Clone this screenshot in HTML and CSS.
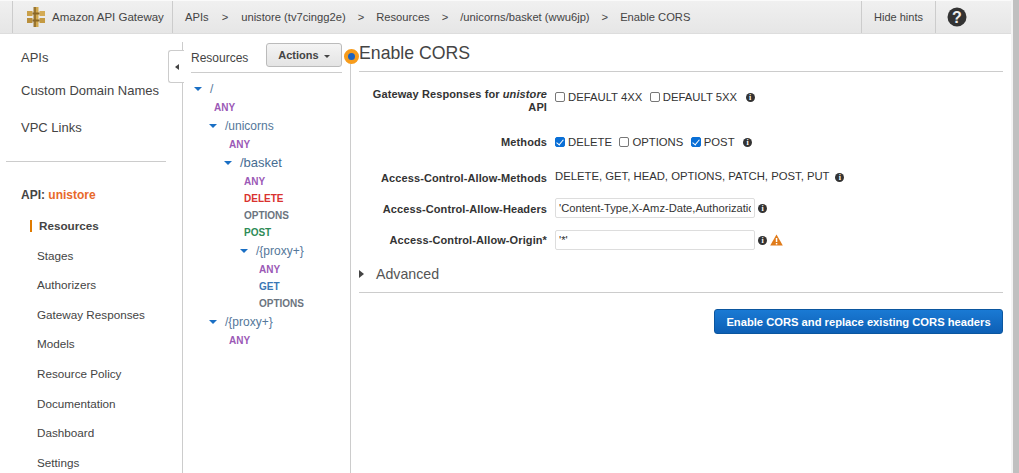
FILE: index.html
```html
<!DOCTYPE html>
<html lang="en">
<head>
  <meta charset="UTF-8">
  <title>Enable CORS</title>
  <link rel="stylesheet" href="styles.css">
</head>
<body>

<div class="page">
  <header class="topbar">
    <div class="brand">
      <svg class="logo" width="18" height="20" viewBox="0 0 18 20">
        <rect x="0" y="4" width="5.5" height="5" fill="#c9a04a"/>
        <rect x="0" y="11" width="5.5" height="5" fill="#b98f3c"/>
        <rect x="12.5" y="4" width="5.5" height="5" fill="#d4ab55"/>
        <rect x="12.5" y="11" width="5.5" height="5" fill="#c49a42"/>
        <rect x="6.5" y="0" width="2.5" height="20" fill="#9a7630"/>
        <rect x="9" y="0" width="2.5" height="20" fill="#d2a94f"/>
        <rect x="5.5" y="5.5" width="7" height="2" fill="#8a6726"/>
        <rect x="5.5" y="12.5" width="7" height="2" fill="#8a6726"/>
      </svg>
      <span>Amazon API Gateway</span>
    </div>
    <nav class="crumbs">
      <a>APIs</a><i class="first">&gt;</i><a>unistore (tv7cingg2e)</a><i>&gt;</i><a>Resources</a><i>&gt;</i><a>/unicorns/basket (wwu6jp)</a><i>&gt;</i><a>Enable CORS</a>
    </nav>
    <div class="hints">Hide hints</div>
    <div class="help">
      <svg width="20" height="20" viewBox="0 0 20 20">
        <circle cx="10" cy="10" r="9.5" fill="#333"/>
        <text x="10" y="15.5" text-anchor="middle" class="help-mark">?</text>
      </svg>
    </div>
  </header>

  <div class="layout">
    <aside class="sidebar">
      <ul class="top-links">
        <li>APIs</li>
        <li>Custom Domain Names</li>
        <li>VPC Links</li>
      </ul>
      <hr class="side-rule">
      <div class="api-name">API: <span>unistore</span></div>
      <ul class="sub-links">
        <li class="active">Resources</li>
        <li>Stages</li>
        <li>Authorizers</li>
        <li>Gateway Responses</li>
        <li>Models</li>
        <li>Resource Policy</li>
        <li>Documentation</li>
        <li>Dashboard</li>
        <li>Settings</li>
      </ul>
    </aside>

    <section class="resources">
      <div class="collapse-tab"><span class="arrow-left"></span></div>
      <div class="res-head">
        <span class="res-title">Resources</span>
        <button class="actions">Actions <span class="caret"></span></button>
      </div>
      <div class="tree">
        <div class="path"><span class="tw"></span>/</div>
        <div class="verb any l0">ANY</div>
        <div class="path l1"><span class="tw"></span>/unicorns</div>
        <div class="verb any l1">ANY</div>
        <div class="path l2 current"><span class="tw"></span>/basket</div>
        <div class="verb any l2">ANY</div>
        <div class="verb del l2">DELETE</div>
        <div class="verb opt l2">OPTIONS</div>
        <div class="verb post l2">POST</div>
        <div class="path l3"><span class="tw"></span>/{proxy+}</div>
        <div class="verb any l3">ANY</div>
        <div class="verb get l3">GET</div>
        <div class="verb opt l3">OPTIONS</div>
        <div class="path l1"><span class="tw"></span>/{proxy+}</div>
        <div class="verb any l1">ANY</div>
      </div>
    </section>

    <main class="content">
      <span class="dot"></span>
      <h1>Enable CORS</h1>

      <div class="row gw-row">
        <label class="name">Gateway Responses for <em>unistore</em> API</label>
        <div class="val">
          <span class="check"><span class="box"></span>DEFAULT 4XX</span>
          <span class="check"><span class="box"></span>DEFAULT 5XX</span>
          <span class="info">i</span>
        </div>
      </div>

      <div class="row methods-row">
        <label class="name">Methods</label>
        <div class="val">
          <span class="check"><span class="box on"></span>DELETE</span>
          <span class="check"><span class="box"></span>OPTIONS</span>
          <span class="check"><span class="box on"></span>POST</span>
          <span class="info">i</span>
        </div>
      </div>

      <div class="row allow-row">
        <label class="name">Access-Control-Allow-Methods</label>
        <div class="val">DELETE, GET, HEAD, OPTIONS, PATCH, POST, PUT <span class="info">i</span></div>
      </div>

      <div class="row headers-row">
        <label class="name">Access-Control-Allow-Headers</label>
        <div class="val">
          <input class="field" type="text" value="'Content-Type,X-Amz-Date,Authorization,X-Api-Key,X-Amz-Security-Token'">
          <span class="info">i</span>
        </div>
      </div>

      <div class="row origin-row">
        <label class="name">Access-Control-Allow-Origin*</label>
        <div class="val">
          <input class="field" type="text" value="'*'">
          <span class="info">i</span>
          <svg class="warn" width="13" height="12" viewBox="0 0 13 12"><path d="M6.5 0.5 L12.8 11.5 H0.2 Z" fill="#e07b1a"/><rect x="5.8" y="4" width="1.5" height="4" fill="#fff"/><rect x="5.8" y="9" width="1.5" height="1.5" fill="#fff"/></svg>
        </div>
      </div>

      <div class="advanced"><span class="arrow-right"></span>Advanced</div>

      <div class="submit-row">
        <button class="primary">Enable CORS and replace existing CORS headers</button>
      </div>
    </main>
  </div>
</div>
<div class="scrollbar"></div>

</body>
</html>
```

FILE: styles.css
```css
* {
  box-sizing: border-box;
}
html, body {
  height: 473px;
  overflow: hidden;
}
body {
  margin: 0;
  display: flex;
  font-family: "Liberation Sans", Arial, sans-serif;
  font-size: 12px;
  color: #333;
  background: #fff;
}
ul {
  list-style: none;
  margin: 0;
  padding: 0;
}
.page {
  width: 1011px;
  flex: none;
}
.scrollbar {
  flex: 1;
  background: #c0c0c0;
  border-left: 2px solid #f4f4f4;
}

/* top bar */
.topbar {
  display: flex;
  align-items: stretch;
  height: 34px;
  background: linear-gradient(#f0f0f0, #e6e6e6);
  border-top: 1px solid #fafafa;
  border-bottom: 1px solid #ddd;
  color: #444;
}
.brand {
  display: flex;
  align-items: center;
  width: 161px;
  margin-left: 12px;
  padding-left: 14px;
  border-left: 1px solid #ccc;
  border-right: 1px solid #ccc;
  font-size: 11.5px;
}
.logo {
  margin-right: 7px;
}
.crumbs {
  flex: 1;
  display: flex;
  align-items: center;
  padding-left: 12px;
  font-size: 11.2px;
}
.crumbs i {
  font-style: normal;
  margin: 0 12px;
}
.crumbs i.first {
  margin: 0 13px;
}
.hints {
  width: 75px;
  display: flex;
  align-items: center;
  justify-content: center;
  border-left: 1px solid #ccc;
  border-right: 1px solid #ccc;
  font-size: 11px;
}
.help {
  width: 75px;
  padding-left: 11px;
  display: flex;
  align-items: center;
}
.help-mark {
  font-family: "Liberation Sans", Arial, sans-serif;
  font-size: 16px;
  font-weight: bold;
  fill: #eee;
}

.layout {
  display: flex;
  height: 439px;
}

/* left nav */
.sidebar {
  width: 182px;
  flex: none;
  padding: 0 0 0 6px;
}
.top-links {
  padding: 7px 0 0 15px;
  font-size: 13px;
  color: #444;
}
.top-links li {
  height: 37px;
  line-height: 33px;
}
.top-links li:first-child {
  height: 33px;
}
.side-rule {
  width: 160px;
  margin: 13px 0 0;
  border: 0;
  border-top: 1px solid #ccc;
}
.api-name {
  margin: 26px 0 0 15px;
  font-size: 12px;
  font-weight: bold;
  color: #444;
}
.api-name span {
  color: #e8692a;
}
.sub-links {
  padding: 16px 0 0 31px;
  font-size: 11.7px;
  color: #444;
}
.sub-links li {
  height: 29.6px;
  line-height: 16px;
}
.sub-links .active {
  font-weight: bold;
  position: relative;
  padding-left: 2px;
}
.sub-links .active::before {
  content: "";
  position: absolute;
  left: -7px;
  top: 2px;
  width: 2px;
  height: 12px;
  background: #e07b00;
}

/* resources tree */
.resources {
  width: 169px;
  flex: none;
  position: relative;
  margin-top: 8px;
  border-left: 1px solid #ccc;
  padding: 0 9px 0 8px;
}
.collapse-tab {
  position: absolute;
  left: -15px;
  top: 8px;
  width: 16px;
  height: 33px;
  background: #fff;
  border: 1px solid #ccc;
  border-right: 0;
  border-radius: 3px 0 0 3px;
  display: flex;
  align-items: center;
  justify-content: center;
}
.arrow-left {
  border: 3px solid transparent;
  border-right: 4px solid #444;
  border-left: 0;
}
.res-head {
  display: flex;
  align-items: center;
  justify-content: space-between;
  height: 31px;
  border-bottom: 1px solid #ccc;
}
.res-title {
  font-size: 12px;
  color: #444;
  margin-top: 1px;
}
.actions {
  width: 76px;
  height: 24px;
  margin-top: -4px;
  padding: 0;
  font: bold 11px "Liberation Sans", Arial, sans-serif;
  color: #444;
  background: linear-gradient(#f4f4f4, #e4e4e4);
  border: 1px solid #bbb;
  border-radius: 3px;
}
.caret {
  display: inline-block;
  vertical-align: middle;
  border: 3px solid transparent;
  border-top: 3px solid #444;
  border-bottom: 0;
  margin-left: 2px;
}
.tree {
  padding-top: 6px;
}
.path {
  height: 20px;
  line-height: 20px;
  font-size: 12px;
  color: #54779a;
  display: flex;
  align-items: center;
  padding-left: 3px;
}
.path .tw {
  width: 0;
  border: 4px solid transparent;
  border-top: 4px solid #1a6fc4;
  border-bottom: 0;
  margin-right: 8px;
}
.path.l1 { padding-left: 18px; }
.path.l2 { padding-left: 33px; }
.path.l3 { padding-left: 49px; }
.path.current {
  font-size: 13px;
  color: #476d92;
}
.verb {
  height: 17px;
  line-height: 17px;
  font-size: 10px;
  font-weight: bold;
}
.verb.l0 { padding-left: 23px; }
.verb.l1 { padding-left: 38px; }
.verb.l2 { padding-left: 53px; }
.verb.l3 { padding-left: 68px; }
.any { color: #9b59b6; }
.del { color: #d9322e; }
.opt { color: #6b7480; }
.post { color: #2e8b57; }
.get { color: #3a76b5; }

/* main */
.content {
  flex: 1;
  position: relative;
  padding: 0 8px 0 8px;
}
.content::before {
  content: "";
  position: absolute;
  left: -1px;
  top: 28px;
  bottom: 0;
  width: 1px;
  background: #ccc;
}
.dot {
  position: absolute;
  left: -7px;
  top: 15px;
  width: 15px;
  height: 15px;
  border-radius: 50%;
  background: #1a62c0;
  border: 4px solid #f79c1c;
}
h1 {
  margin: 0;
  height: 38px;
  padding: 9px 0 0;
  border-bottom: 1px solid #ccc;
  font-size: 17.7px;
  font-weight: normal;
  line-height: 21px;
  color: #444;
}
.row {
  display: flex;
}
.name {
  width: 188px;
  flex: none;
  text-align: right;
  font-weight: bold;
  font-size: 11px;
  line-height: 13px;
  color: #333;
  letter-spacing: 0.1px;
}
.val {
  display: flex;
  align-items: center;
  margin-left: 8px;
  font-size: 11.3px;
  height: 14px;
}
.gw-row { margin-top: 16px; height: 28px; }
.gw-row .val { margin-top: 2px; }
.methods-row { margin-top: 19px; }
.methods-row .name { padding-top: 1px; }
.allow-row { margin-top: 21px; }
.allow-row .name { padding-top: 2px; }
.allow-row .val { display: block; line-height: 13px; }
.headers-row { margin-top: 13px; height: 20px; align-items: center; }
.headers-row .name { padding-top: 3px; }
.origin-row { margin-top: 12px; height: 20px; align-items: center; }
.headers-row .val, .origin-row .val { height: 20px; }
.check {
  display: inline-flex;
  align-items: center;
  margin-right: 7.5px;
}
.box {
  width: 10px;
  height: 10px;
  margin-right: 3px;
  border: 1px solid #777;
  border-radius: 2px;
  background: #fff;
}
.box.on {
  background: #0a6fd6;
  border-color: #0a6fd6;
  position: relative;
}
.box.on::after {
  content: "";
  position: absolute;
  left: 2px;
  top: 0;
  width: 3px;
  height: 6px;
  border: solid #fff;
  border-width: 0 1.5px 1.5px 0;
  transform: rotate(40deg);
}
.info {
  display: inline-block;
  width: 9px;
  height: 9px;
  border-radius: 50%;
  background: #333;
  color: #fff;
  font: bold 8px/9px "Liberation Serif", serif;
  text-align: center;
  margin-left: 1px;
}
.allow-row .info {
  margin-left: 3px;
}
.field {
  width: 200px;
  height: 20px;
  padding: 0 3px;
  font: 11.2px "Liberation Sans", Arial, sans-serif;
  color: #333;
  background: #fff;
  border: 1px solid #ddd;
  border-radius: 2px;
  margin-right: 2px;
}
.warn {
  margin-left: 3px;
}
.advanced {
  display: flex;
  align-items: center;
  margin-top: 14px;
  height: 20px;
  font-size: 14.2px;
  color: #555;
}
.arrow-right {
  border: 4px solid transparent;
  border-left: 5px solid #444;
  border-right: 0;
  margin-right: 12px;
}
.submit-row {
  display: flex;
  justify-content: flex-end;
  margin-top: 8px;
  padding-top: 16px;
  border-top: 1px solid #ccc;
}
.primary {
  height: 25px;
  width: 289px;
  padding: 0;
  font: bold 11.2px "Liberation Sans", Arial, sans-serif;
  color: #fff;
  background: linear-gradient(#1a7ad4, #0d5fb5);
  border: 1px solid #0b569f;
  border-radius: 3px;
}
```
